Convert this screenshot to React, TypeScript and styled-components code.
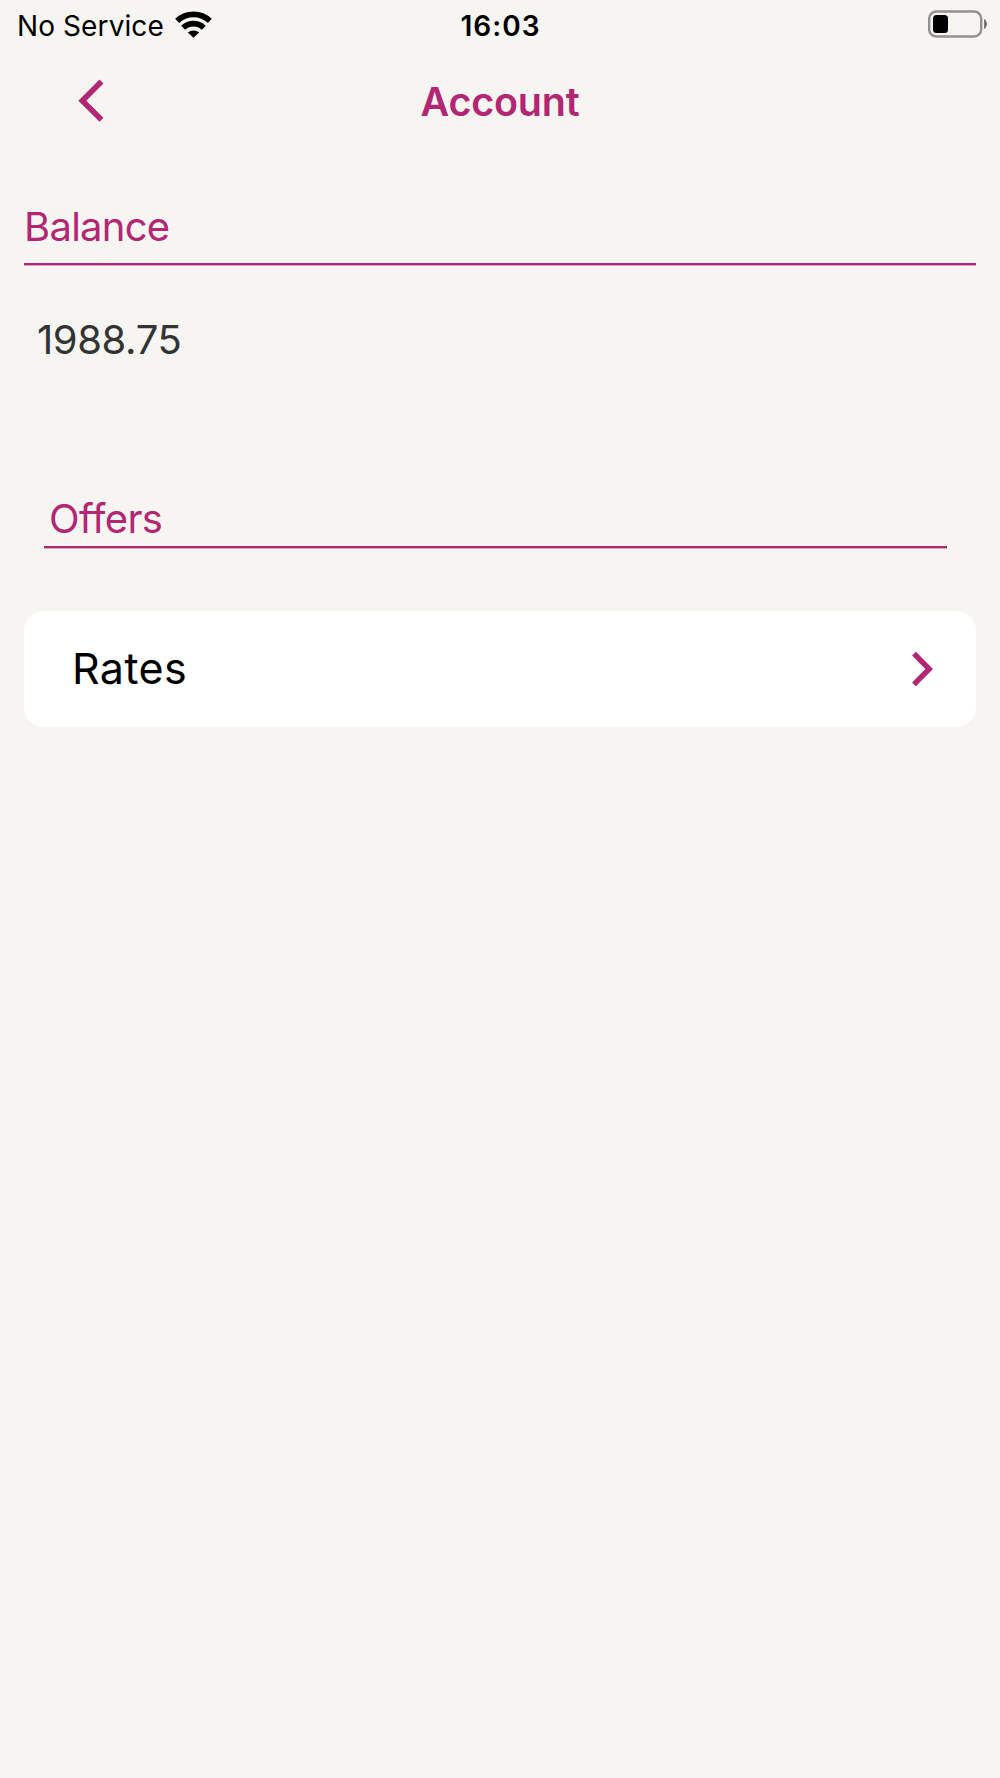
import React from "react";
import styled, { createGlobalStyle } from "styled-components";

const accent = "#b22674";

const GlobalStyle = createGlobalStyle`
  html, body { margin: 0; background: #f6f5f1; }
  * { box-sizing: border-box; }
`;

const Screen = styled.div`
  width: 1000px;
  height: 1778px;
  overflow: hidden;
  background: #f6f5f1;
  font-family: Inter, "Liberation Sans", sans-serif;
  display: flex;
  flex-direction: column;
`;

const StatusBar = styled.header`
  height: 51px;
  padding: 0 13px 0 17px;
  display: grid;
  grid-template-columns: 1fr auto 1fr;
  align-items: center;
  color: #000;
  font-size: 28px;
  line-height: 50px;
`;

const Carrier = styled.div`
  display: flex;
  align-items: center;
  gap: 11px;
  letter-spacing: 0.1px;
  white-space: nowrap;

  svg {
    margin-bottom: 4px;
  }
`;

const Clock = styled.time`
  font-weight: 600;
  letter-spacing: 1.05px;
  margin-right: 3px;
`;

const BatterySlot = styled.div`
  display: flex;
  justify-content: flex-end;
  margin-bottom: 3px;
`;

const NavBar = styled.nav`
  height: 101px;
  padding: 0 76px;
  display: grid;
  grid-template-columns: 1fr auto 1fr;
  align-items: center;
`;

const BackButton = styled.button`
  display: flex;
  width: 30px;
  margin-bottom: 2px;
  padding: 0;
  border: 0;
  background: none;
`;

const Title = styled.h1`
  margin: 0;
  color: ${accent};
  font-size: 39.5px;
  font-weight: 600;
  line-height: 48px;
  letter-spacing: -0.2px;
`;

const Content = styled.main`
  padding: 51px 24px 0;
`;

const SectionTitle = styled.h2<{ $inset?: boolean }>`
  margin: ${(p) => (p.$inset ? "131px 29px 0 20px" : "0")};
  padding: ${(p) => (p.$inset ? "0 0 3px 5px" : "0 0 12px")};
  border-bottom: 2px solid ${accent};
  box-shadow: 0 1px 0 rgba(178, 38, 116, 0.4);
  color: ${accent};
  font-size: 40px;
  font-weight: 400;
  line-height: 48px;
  letter-spacing: ${(p) => (p.$inset ? "-0.6px" : "-0.75px")};
`;

const Amount = styled.p`
  margin: 51px 0 0 13px;
  color: #333;
  font-size: 40px;
  line-height: 48px;
  letter-spacing: -0.4px;
`;

const Card = styled.button`
  display: flex;
  width: 100%;
  height: 116px;
  margin: 63px 0 0;
  padding: 0 40px 0 48px;
  align-items: center;
  justify-content: space-between;
  border: 0;
  border-radius: 20px;
  background: #fff;
  color: #000;
  font: inherit;
  font-size: 43px;
  line-height: 52px;
  letter-spacing: 0.4px;

  span {
    margin-bottom: 2px;
  }
`;

const WifiIcon = () => (
  <svg width="37" height="28" viewBox="0 0 38 28" fill="none" stroke="#000" strokeWidth="5.8">
    <path d="M2.2 10.8a24.4 24.4 0 0 1 33.6 0" />
    <path d="M8.4 17.8a15.4 15.4 0 0 1 21.2 0" />
    <path d="M13.2 22.8a8.6 8.6 0 0 1 11.6 0L19 28z" fill="#000" stroke="none" />
  </svg>
);

const BatteryIcon = () => (
  <svg width="59" height="30" viewBox="0 0 59 30">
    <rect x="1.2" y="2.5" width="52" height="25" rx="7" fill="none" stroke="#92918f" strokeWidth="2.4" />
    <rect x="5" y="6" width="15" height="18" rx="3.5" fill="#000" />
    <path d="M56 10c4 1.5 4 8.5 0 10z" fill="#777" />
  </svg>
);

const BackIcon = () => (
  <svg width="30" height="44" viewBox="0 0 30 44" fill="none" stroke={accent} strokeWidth="5.6">
    <path d="M25.5 2.6 6.3 21.7 25.5 40.8" />
  </svg>
);

const ForwardIcon = () => (
  <svg width="24" height="38" viewBox="0 0 24 38" fill="none" stroke={accent} strokeWidth="5.4">
    <path d="M2 3.6 17.2 19 2 34.4" />
  </svg>
);

export default function App() {
  return (
    <>
      <GlobalStyle />
      <Screen>
        <StatusBar>
          <Carrier>
            <span>No Service</span>
            <WifiIcon />
          </Carrier>
          <Clock>16:03</Clock>
          <BatterySlot>
            <BatteryIcon />
          </BatterySlot>
        </StatusBar>
        <NavBar>
          <BackButton aria-label="Back">
            <BackIcon />
          </BackButton>
          <Title>Account</Title>
        </NavBar>
        <Content>
          <SectionTitle>Balance</SectionTitle>
          <Amount>1988.75</Amount>
          <SectionTitle $inset>Offers</SectionTitle>
          <Card>
            <span>Rates</span>
            <ForwardIcon />
          </Card>
        </Content>
      </Screen>
    </>
  );
}
